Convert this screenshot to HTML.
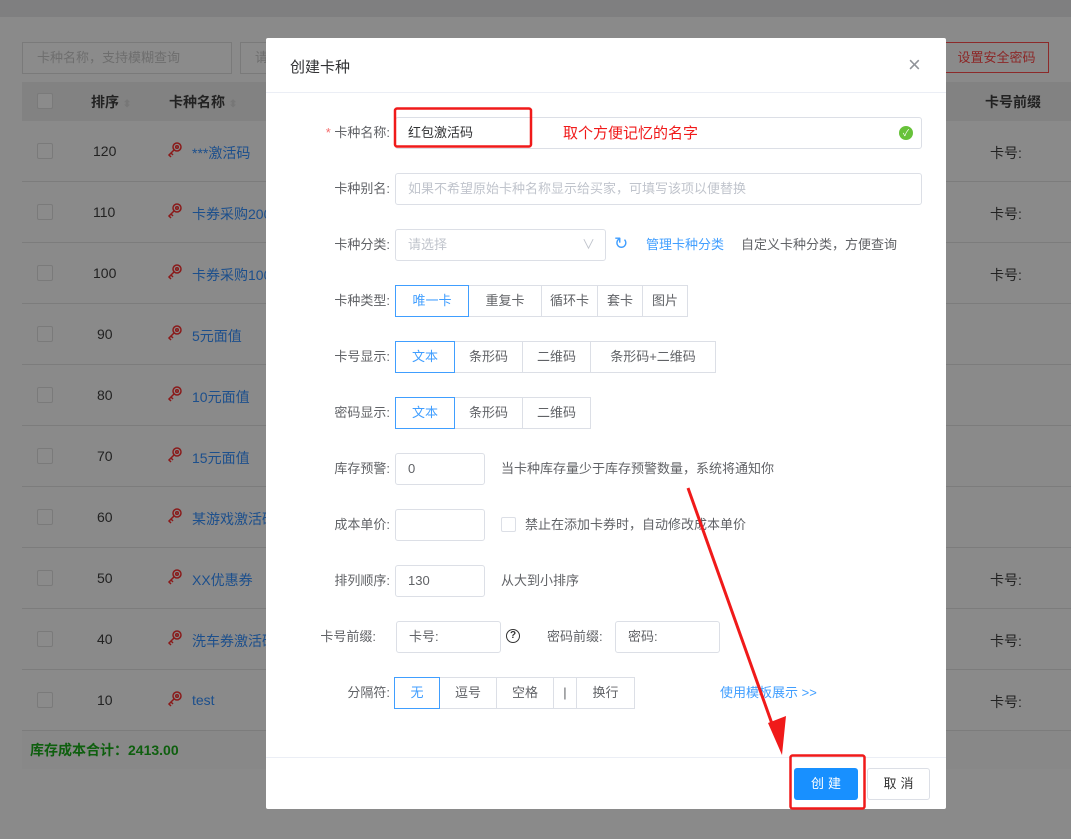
<!DOCTYPE html>
<html><head><meta charset="utf-8">
<style>
*{box-sizing:border-box;margin:0;padding:0}
body{width:1071px;height:839px;overflow:hidden;background:#8a8a8a;font-family:"Liberation Sans","Noto Sans CJK SC",sans-serif;font-size:13px;color:#606266;position:relative}
.a{position:absolute}
.top{left:0;top:0;width:1071px;height:17px;background:#7f7f80}
.bg-in{border:1px solid #7a7a7a;background:#8b8b8b;color:#6e6e6e;height:32px;line-height:30px;padding-left:14px}
.th{left:22px;top:82px;width:1049px;height:39px;background:#828282}
.row{left:22px;width:1049px;height:1px;background:#7c7c7c}
.cb{width:16px;height:16px;border:1px solid #7a7a7a;border-radius:2px;background:#8b8b8b}
.t{color:#222;font-size:14px}
.lk{color:#1c4f8c;font-size:14px}
.modal{left:266px;top:38px;width:680px;height:771px;background:#fff;border-radius:2px}
.lb{width:124px;text-align:right;color:#606266;font-size:13px;line-height:32px}
.in{border:1px solid #dcdfe6;border-radius:3px;height:32px;line-height:30px;padding-left:12px;font-size:13px;color:#606266;background:#fff}
.ph{color:#c0c4cc}
.grp{display:flex;height:32px}
.grp div{border:1px solid #dcdfe6;margin-left:-1px;line-height:30px;text-align:center;font-size:13px;color:#606266;background:#fff}
.grp div.on{border-color:#409eff;color:#409eff;position:relative;z-index:1;margin-left:0}
.tip{font-size:13px;color:#606266;line-height:32px}
.blue{color:#409eff}
</style></head><body>
<div class="a top"></div>
<div class="a bg-in" style="left:22px;top:42px;width:210px">卡种名称，支持模糊查询</div>
<div class="a bg-in" style="left:240px;top:42px;width:60px">请</div>
<div class="a" style="left:944px;top:42px;width:105px;height:31px;border:1px solid #8c2a2a;color:#8c2626;font-size:13px;line-height:29px;text-align:center">设置安全密码</div>
<div class="a th"></div>
<div class="a cb" style="left:37px;top:93px"></div>
<div class="a t" style="left:91px;top:92px;font-weight:bold">排序 <span style="color:#777;font-size:10px">⬍</span></div>
<div class="a t" style="left:169px;top:92px;font-weight:bold">卡种名称 <span style="color:#777;font-size:10px">⬍</span></div>
<div class="a t" style="left:985px;top:92px;font-weight:bold">卡号前缀</div>

<!-- rows -->
<div class="a row" style="top:181px"></div><div class="a row" style="top:242px"></div><div class="a row" style="top:303px"></div><div class="a row" style="top:364px"></div><div class="a row" style="top:425px"></div><div class="a row" style="top:486px"></div><div class="a row" style="top:547px"></div><div class="a row" style="top:608px"></div><div class="a row" style="top:669px"></div><div class="a row" style="top:730px"></div>
<div class="a" style="left:22px;top:731px;width:1049px;height:38px;background:#888"></div>
<div class="a" style="left:30px;top:740px;color:#0e5f0e;font-weight:bold;font-size:14px">库存成本合计：2413.00</div>

<svg class="a" style="left:0;top:0" width="266" height="839">
<g fill="none" stroke="#8a1a1a" stroke-width="1.5">
<g id="k"><circle cx="177" cy="147" r="4"/><circle cx="177" cy="147" r="1.3"/><path d="M174 150 L169 155 L171 157 M171 153 L173 155"/></g>
<use href="#k" y="61"/><use href="#k" y="122"/><use href="#k" y="183"/><use href="#k" y="244"/><use href="#k" y="305"/><use href="#k" y="366"/><use href="#k" y="427"/><use href="#k" y="488"/><use href="#k" y="549"/>
</g></svg>

<div class="a cb" style="left:37px;top:143px"></div><div class="a t" style="left:93px;top:143px">120</div><div class="a lk" style="left:192px;top:143px">***激活码</div>
<div class="a cb" style="left:37px;top:204px"></div><div class="a t" style="left:93px;top:204px">110</div><div class="a lk" style="left:192px;top:204px">卡券采购200</div>
<div class="a cb" style="left:37px;top:265px"></div><div class="a t" style="left:93px;top:265px">100</div><div class="a lk" style="left:192px;top:265px">卡券采购100</div>
<div class="a cb" style="left:37px;top:326px"></div><div class="a t" style="left:97px;top:326px">90</div><div class="a lk" style="left:192px;top:326px">5元面值</div>
<div class="a cb" style="left:37px;top:387px"></div><div class="a t" style="left:97px;top:387px">80</div><div class="a lk" style="left:192px;top:387px">10元面值</div>
<div class="a cb" style="left:37px;top:448px"></div><div class="a t" style="left:97px;top:448px">70</div><div class="a lk" style="left:192px;top:448px">15元面值</div>
<div class="a cb" style="left:37px;top:509px"></div><div class="a t" style="left:97px;top:509px">60</div><div class="a lk" style="left:192px;top:509px">某游戏激活码</div>
<div class="a cb" style="left:37px;top:570px"></div><div class="a t" style="left:97px;top:570px">50</div><div class="a lk" style="left:192px;top:570px">XX优惠券</div>
<div class="a cb" style="left:37px;top:631px"></div><div class="a t" style="left:97px;top:631px">40</div><div class="a lk" style="left:192px;top:631px">洗车券激活码</div>
<div class="a cb" style="left:37px;top:692px"></div><div class="a t" style="left:97px;top:692px">10</div><div class="a lk" style="left:192px;top:692px">test</div>
<div class="a t" style="left:990px;top:143px">卡号:</div><div class="a t" style="left:990px;top:204px">卡号:</div><div class="a t" style="left:990px;top:265px">卡号:</div><div class="a t" style="left:990px;top:570px">卡号:</div><div class="a t" style="left:990px;top:631px">卡号:</div><div class="a t" style="left:990px;top:692px">卡号:</div>

<!-- modal -->
<div class="a modal"></div>
<div class="a" style="left:290px;top:56px;font-size:15px;color:#303133">创建卡种</div>
<div class="a" style="left:908px;top:52px;font-size:22px;color:#909399;font-weight:300">×</div>
<div class="a" style="left:266px;top:92px;width:680px;height:1px;background:#ebeef5"></div>

<div class="a lb" style="left:266px;top:117px"><span style="color:#f56c6c">* </span>卡种名称:</div>
<div class="a in" style="left:395px;top:117px;width:527px;color:#303133">红包激活码</div>
<div class="a" style="left:563px;top:122px;color:#f01a1a;font-size:15px">取个方便记忆的名字</div>
<div class="a" style="left:899px;top:126px;width:14px;height:14px;border-radius:50%;background:#67c23a;color:#fff;font-size:9px;line-height:14px;text-align:center">✓</div>

<div class="a lb" style="left:266px;top:173px">卡种别名:</div>
<div class="a in ph" style="left:395px;top:173px;width:527px">如果不希望原始卡种名称显示给买家，可填写该项以便替换</div>

<div class="a lb" style="left:266px;top:229px">卡种分类:</div>
<div class="a in ph" style="left:395px;top:229px;width:211px">请选择<span style="position:absolute;right:10px;color:#c0c4cc">∨</span></div>
<div class="a" style="left:614px;top:234px;color:#409eff;font-size:17px">↻</div>
<div class="a tip blue" style="left:646px;top:229px">管理卡种分类</div>
<div class="a tip" style="left:741px;top:229px">自定义卡种分类，方便查询</div>

<div class="a lb" style="left:266px;top:285px">卡种类型:</div>
<div class="a grp" style="left:395px;top:285px"><div class="on" style="width:74px">唯一卡</div><div style="width:74px">重复卡</div><div style="width:57px">循环卡</div><div style="width:46px">套卡</div><div style="width:46px">图片</div></div>

<div class="a lb" style="left:266px;top:341px">卡号显示:</div>
<div class="a grp" style="left:395px;top:341px"><div class="on" style="width:60px">文本</div><div style="width:69px">条形码</div><div style="width:69px">二维码</div><div style="width:126px">条形码+二维码</div></div>

<div class="a lb" style="left:266px;top:397px">密码显示:</div>
<div class="a grp" style="left:395px;top:397px"><div class="on" style="width:60px">文本</div><div style="width:69px">条形码</div><div style="width:69px">二维码</div></div>

<div class="a lb" style="left:266px;top:453px">库存预警:</div>
<div class="a in" style="left:395px;top:453px;width:90px">0</div>
<div class="a tip" style="left:501px;top:453px">当卡种库存量少于库存预警数量，系统将通知你</div>

<div class="a lb" style="left:266px;top:509px">成本单价:</div>
<div class="a in" style="left:395px;top:509px;width:90px"></div>
<div class="a" style="left:501px;top:517px;width:15px;height:15px;border:1px solid #dcdfe6;border-radius:2px"></div>
<div class="a tip" style="left:525px;top:509px">禁止在添加卡券时，自动修改成本单价</div>

<div class="a lb" style="left:266px;top:565px">排列顺序:</div>
<div class="a in" style="left:395px;top:565px;width:90px">130</div>
<div class="a tip" style="left:501px;top:565px">从大到小排序</div>

<div class="a lb" style="left:252px;top:621px">卡号前缀:</div>
<div class="a in" style="left:396px;top:621px;width:105px">卡号:</div>
<div class="a" style="left:506px;top:629px;width:14px;height:14px;border:1.3px solid #333;border-radius:50%;font-size:10px;line-height:12px;text-align:center;color:#333;font-weight:bold">?</div>
<div class="a tip" style="left:547px;top:621px">密码前缀:</div>
<div class="a in" style="left:615px;top:621px;width:105px">密码:</div>

<div class="a lb" style="left:266px;top:677px">分隔符:</div>
<div class="a grp" style="left:394px;top:677px"><div class="on" style="width:46px">无</div><div style="width:39px;width:58px">逗号</div><div style="width:39px;width:58px">空格</div><div style="width:24px">|</div><div style="width:59px">换行</div></div>
<div class="a tip blue" style="left:720px;top:677px">使用模板展示 &gt;&gt;</div>

<div class="a" style="left:266px;top:757px;width:680px;height:1px;background:#ebeef5"></div>
<div class="a" style="left:794px;top:768px;width:64px;height:32px;background:#1890ff;color:#fff;border-radius:3px;text-align:center;line-height:32px;font-size:13px;letter-spacing:4px;padding-left:4px">创建</div>
<div class="a" style="left:867px;top:768px;width:63px;height:32px;border:1px solid #dcdfe6;color:#333;border-radius:3px;text-align:center;line-height:30px;font-size:13px;letter-spacing:4px;padding-left:4px">取消</div>

<svg class="a" style="left:0;top:0" width="1071" height="839">
<rect x="395" y="108.5" width="136" height="38" rx="2" fill="none" stroke="#f01a1a" stroke-width="2.5"/>
<rect x="790.5" y="755.5" width="74" height="53" rx="2" fill="none" stroke="#f01a1a" stroke-width="2.5"/>
<line x1="688" y1="488" x2="776" y2="735" stroke="#f01a1a" stroke-width="3"/>
<polygon points="768,723 786,716 782,755" fill="#f01a1a"/>
</svg>
</body></html>
